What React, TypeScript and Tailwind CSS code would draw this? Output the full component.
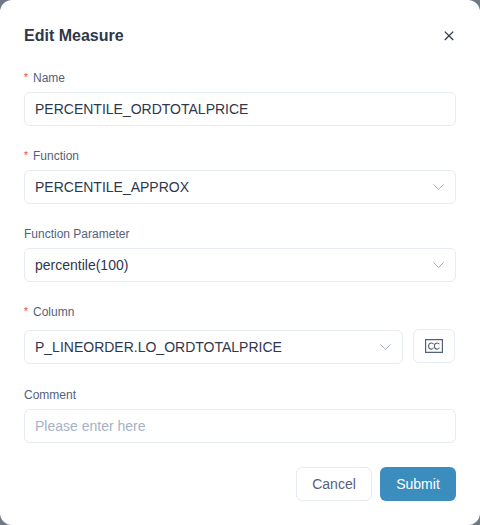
import type { ReactNode } from 'react';

function Label({ text, required }: { text: string; required?: boolean }) {
  return (
    <div className="flex h-[18px] items-start text-xs leading-[18px] text-[#55617a]">
      {required && <span className="mr-1 w-[5px] text-[10px] leading-[17px] text-[#f0403c]">*</span>}
      {text}
    </div>
  );
}

function Box({ children, className = '' }: { children: ReactNode; className?: string }) {
  return (
    <div
      className={`flex h-[34px] items-center justify-between rounded-md border border-[#e6eaf4] pr-[11px] pl-[10px] text-sm text-[#2f374c] ${className}`}
    >
      {children}
    </div>
  );
}

function Chevron() {
  return (
    <svg width="12" height="8" viewBox="0 0 12 8" fill="none" stroke="#a5b2c5" strokeWidth="1">
      <path d="M1.4 1.4 6.5 6.5 11.6 1.4" />
    </svg>
  );
}

export default function App() {
  return (
    <div className="h-[525px] w-[480px] overflow-hidden bg-[#717784] font-['Liberation_Sans',Arial,sans-serif]">
      <div className="flex h-full flex-col rounded-xl bg-white px-6 pt-6">
        <header className="flex h-6 items-center justify-between">
          <h1 className="text-base leading-6 font-bold text-[#2f374c]">Edit Measure</h1>
          <svg className="mr-[2px]" width="10" height="10" viewBox="0 0 10 10" fill="none" stroke="#2f374c" strokeWidth="1.3">
            <path d="M.8.6 9.2 9M9.2.6.8 9" />
          </svg>
        </header>

        <div className="mt-[21px]">
          <Label text="Name" required />
          <Box className="mt-[5px]">PERCENTILE_ORDTOTALPRICE</Box>
        </div>

        <div className="mt-[21px]">
          <Label text="Function" required />
          <Box className="mt-[5px]">
            PERCENTILE_APPROX
            <Chevron />
          </Box>
        </div>

        <div className="mt-[21px]">
          <Label text="Function Parameter" />
          <Box className="mt-[5px]">
            percentile(100)
            <Chevron />
          </Box>
        </div>

        <div className="mt-[21px]">
          <Label text="Column" required />
          <div className="mt-[8px] flex h-[35px] items-start gap-[10px]">
            <Box className="mt-px w-[379px]">
              P_LINEORDER.LO_ORDTOTALPRICE
              <Chevron />
            </Box>
            <button className="flex h-[34px] w-[42px] items-center justify-center rounded-md border border-[#e6eaf4]">
              <svg width="18" height="14" viewBox="0 0 18 14" fill="none" stroke="#55617a">
                <path d="M.6.6H17.4V13.3H.6Z" strokeWidth="1.2" />
                <path
                  d="M8.6 5.3C8.1 4.3 7.3 3.9 6.4 3.9 4.7 3.9 3.6 5.1 3.6 7s1.1 3.1 2.8 3.1c1 0 1.8-.5 2.2-1.5M14.4 5.3c-.5-1-1.3-1.4-2.2-1.4C10.5 3.9 9.4 5.1 9.4 7s1.1 3.1 2.8 3.1c1 0 1.8-.5 2.2-1.5"
                  strokeWidth="1.05"
                />
              </svg>
            </button>
          </div>
        </div>

        <div className="mt-[22px]">
          <Label text="Comment" />
          <Box className="mt-[5px]">
            <span className="text-[#a5b2c5]">Please enter here</span>
          </Box>
        </div>

        <footer className="mt-6 flex justify-end gap-2 text-sm">
          <button className="h-[34px] w-[76px] rounded-md border border-[#e6eaf4] text-[#55617a]">Cancel</button>
          <button className="h-[34px] w-[76px] rounded-md bg-[#3b8dbd] text-white">Submit</button>
        </footer>
      </div>
    </div>
  );
}
